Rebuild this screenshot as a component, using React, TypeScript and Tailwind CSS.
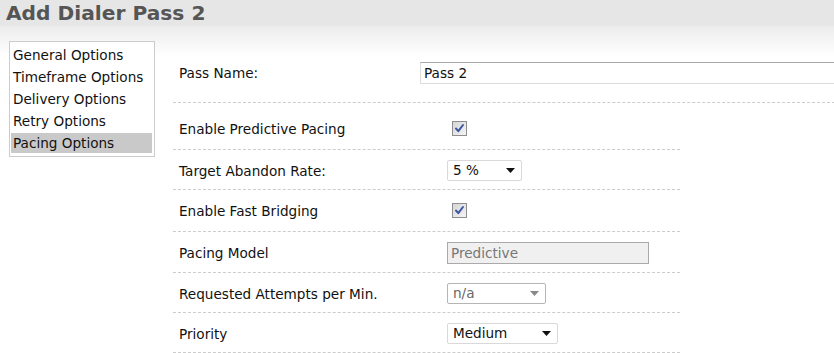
import React from "react";

const font = { fontFamily: '"DejaVu Sans", Verdana, sans-serif' };

function Check() {
  return (
    <div className="ml-[5px] w-[15px] h-[15px] border border-[#8e8e8e] bg-[linear-gradient(135deg,#d6d6d6,#f4f4f4)] flex items-center justify-center">
      <svg width="11" height="11" viewBox="0 0 11 11">
        <path d="M2 5.5 L4.3 8.2 L9 2" fill="none" stroke="#3d56a6" strokeWidth="2" strokeLinecap="round" strokeLinejoin="round" />
      </svg>
    </div>
  );
}

function Arrow({ color = "#111" }: { color?: string }) {
  return (
    <svg width="9" height="5" viewBox="0 0 9 5">
      <polygon points="0,0 9,0 4.5,5" fill={color} />
    </svg>
  );
}

function Select({ value, w, disabled }: { value: string; w: string; disabled?: boolean }) {
  return (
    <div
      className={`${w} h-[21px] rounded-[2px] border ${
        disabled ? "border-[#b5b5b5] text-[#666]" : "border-[#d9d9d9] text-[#111]"
      } bg-white flex items-center justify-between pl-[5px] pr-[6px]`}
    >
      <span className="leading-none pt-[1px]">{value}</span>
      <Arrow color={disabled ? "#888" : "#111"} />
    </div>
  );
}

const dashed = "border-b border-dashed border-[#cccccc]";

export default function App() {
  return (
    <div className="w-[834px] h-[353px] overflow-hidden bg-white text-[13.6px] text-[#111]" style={font}>
      <div className="h-[26px] bg-[#e6e6e6] flex items-center pl-[6px]">
        <h1 className="text-[20.2px] font-bold text-[#555] leading-none pt-[1px]">Add Dialer Pass 2</h1>
      </div>
      <div className="flex bg-[linear-gradient(to_bottom,#ececec_0px,#ffffff_30px)] h-[327px]">
        <div className="ml-[9px] mt-[15px] w-[146px] h-[116px] border border-[#cccccc] bg-white pt-[2px] pb-[2px] pl-[1px] pr-[2px] flex flex-col shrink-0">
          {["General Options", "Timeframe Options", "Delivery Options", "Retry Options", "Pacing Options"].map((t, i) => (
            <div
              key={t}
              className={`h-[20px] my-[1px] pl-[2px] pt-[1px] flex items-center whitespace-nowrap ${i === 4 ? "bg-[#c9c9c9]" : ""}`}
            >
              {t}
            </div>
          ))}
        </div>
        <div className="ml-[18px] mt-[15px] flex-1 flex flex-col">
          <div className={`flex items-center pt-[21px] pb-[18px] ${dashed}`}>
            <div className="w-[247px] pl-[6px] shrink-0 pt-[1px]">Pass Name:</div>
            <div className="w-[440px] shrink-0 h-[22px] border border-[#dcdcdc] border-t-[#a8a8a8] pl-[3px] pt-[1px] flex items-center bg-white">Pass 2</div>
          </div>
          <div className="w-[507px] flex flex-col">
            <div className={`h-[47px] pt-[5px] flex items-center ${dashed}`}>
              <div className="w-[274px] pl-[6px] pt-[1px]">Enable Predictive Pacing</div>
              <Check />
            </div>
            <div className={`h-[40px] pt-[2px] flex items-center ${dashed}`}>
              <div className="w-[274px] pl-[6px] pt-[1px]">Target Abandon Rate:</div>
              <Select value="5 %" w="w-[75px]" />
            </div>
            <div className={`h-[42px] flex items-center ${dashed}`}>
              <div className="w-[274px] pl-[6px] pt-[2px]">Enable Fast Bridging</div>
              <Check />
            </div>
            <div className={`h-[41px] pt-[2px] flex items-center ${dashed}`}>
              <div className="w-[274px] pl-[6px] pt-[1px]">Pacing Model</div>
              <div className="w-[202px] h-[22px] border border-[#aaaaaa] bg-[#f0f0f0] text-[#777] pl-[3px] pt-[1px] flex items-center">Predictive</div>
            </div>
            <div className={`h-[40px] pt-[2px] flex items-center ${dashed}`}>
              <div className="w-[274px] pl-[6px] pt-[1px]">Requested Attempts per Min.</div>
              <Select value="n/a" w="w-[99px]" disabled />
            </div>
            <div className={`h-[40px] pt-[2px] flex items-center ${dashed}`}>
              <div className="w-[274px] pl-[6px] pt-[1px]">Priority</div>
              <Select value="Medium" w="w-[111px]" />
            </div>
          </div>
        </div>
      </div>
    </div>
  );
}
